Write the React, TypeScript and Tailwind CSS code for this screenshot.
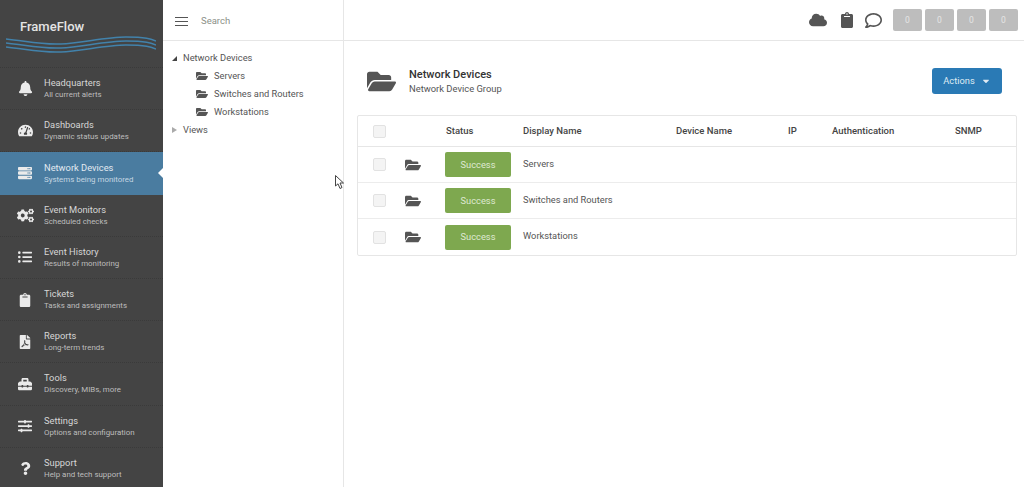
import type { ReactNode } from 'react';
import {
  FaBell,
  FaCaretDown,
  FaClipboard,
  FaCloud,
  FaCogs,
  FaFilePdf,
  FaFolderOpen,
  FaListUl,
  FaQuestion,
  FaRegComment,
  FaServer,
  FaSlidersH,
  FaTachometerAlt,
  FaToolbox,
} from 'react-icons/fa';

const navItems: { title: string; sub: string; icon: ReactNode; active?: boolean }[] = [
  { title: 'Headquarters', sub: 'All current alerts', icon: <FaBell size={15} /> },
  { title: 'Dashboards', sub: 'Dynamic status updates', icon: <FaTachometerAlt size={15} /> },
  { title: 'Network Devices', sub: 'Systems being monitored', icon: <FaServer size={14} />, active: true },
  { title: 'Event Monitors', sub: 'Scheduled checks', icon: <FaCogs size={17} /> },
  { title: 'Event History', sub: 'Results of monitoring', icon: <FaListUl size={14} /> },
  { title: 'Tickets', sub: 'Tasks and assignments', icon: <FaClipboard size={14} /> },
  { title: 'Reports', sub: 'Long-term trends', icon: <FaFilePdf size={14} /> },
  { title: 'Tools', sub: 'Discovery, MIBs, more', icon: <FaToolbox size={14} /> },
  { title: 'Settings', sub: 'Options and configuration', icon: <FaSlidersH size={14} /> },
  { title: 'Support', sub: 'Help and tech support', icon: <FaQuestion size={13} /> },
];

const rows = ['Servers', 'Switches and Routers', 'Workstations'];
const tableCols = 'grid grid-cols-[88px_77px_153px_112px_44px_123px_1fr] items-center';

function Wave() {
  const d = 'M0 3 C 20 5, 35 9, 55 8 S 100 1, 120 1 S 145 3, 150 5';
  return (
    <svg width="150" height="18" viewBox="0 0 150 18" fill="none" stroke="#4282ab" strokeWidth="1.5">
      <path d={d} />
      <path d={d} transform="translate(0 4)" />
      <path d={d} transform="translate(0 8)" />
    </svg>
  );
}

function Checkbox() {
  return <div className="ml-[15px] h-[13px] w-[13px] rounded-[2px] border border-[#e2e2e2] bg-[#f4f4f4]" />;
}

export default function App() {
  return (
    <div className="relative flex h-[487px] w-[1024px] overflow-hidden bg-white font-['Roboto',sans-serif] text-[#4a4a4a]">
      {/* Sidebar */}
      <aside className="flex w-[163px] shrink-0 flex-col overflow-hidden bg-[#444444]">
        <div className="h-[68px] shrink-0 border-b border-dotted border-[#3a3a3a] pl-1.5">
          <div className="pl-3.5 pt-[18px] text-[13px] leading-[18px] font-medium text-[#e4e4e4]">FrameFlow</div>
          <Wave />
        </div>
        {navItems.map((item) => (
          <div
            key={item.title}
            className={`relative flex h-[42.2px] shrink-0 items-center ${
              item.active ? 'bg-[#4a7ca0]' : 'border-b border-dotted border-[#3a3a3a]'
            }`}
          >
            <div className="flex w-[44px] shrink-0 justify-center pl-[6px] text-[#ebebeb]">{item.icon}</div>
            <div className="min-w-0">
              <div className={`text-[9.3px] leading-[13px] whitespace-nowrap ${item.active ? 'text-[#e3eaf0]' : 'text-[#d6d6d6]'}`}>
                {item.title}
              </div>
              <div className={`text-[7.9px] leading-[12px] whitespace-nowrap ${item.active ? 'text-[#c4d6e2]' : 'text-[#bdbdbd]'}`}>
                {item.sub}
              </div>
            </div>
            {item.active && (
              <div className="absolute right-0 top-[16px] h-0 w-0 border-y-[5px] border-r-[5px] border-y-transparent border-r-white" />
            )}
          </div>
        ))}
      </aside>

      {/* Tree panel */}
      <div className="flex w-[181px] shrink-0 flex-col border-r border-[#e6e6e6]">
        <div className="flex h-[41px] shrink-0 items-center border-b border-[#e6e6e6] pl-3 pt-[2px]">
          <div className="flex w-[13px] flex-col gap-[3px]">
            <div className="h-px bg-[#555555]" />
            <div className="h-px bg-[#555555]" />
            <div className="h-px bg-[#555555]" />
          </div>
          <span className="ml-[13px] text-[9.5px] text-[#8b9088]">Search</span>
        </div>
        <div className="pt-[8px] text-[9.3px] leading-[18px] text-[#555555]">
          <div className="flex items-center pl-[9px]">
            <div className="h-0 w-0 border-b-[5px] border-l-[5px] border-b-[#444444] border-l-transparent" />
            <span className="ml-1.5">Network Devices</span>
          </div>
          {rows.map((r) => (
            <div key={r} className="flex items-center pl-[33px]">
              <FaFolderOpen size={12} className="text-[#555555]" />
              <span className="ml-1.5">{r}</span>
            </div>
          ))}
          <div className="flex items-center pl-[9px]">
            <div className="h-0 w-0 border-y-[3.5px] border-l-[5px] border-y-transparent border-l-[#aaaaaa]" />
            <span className="ml-[6px]">Views</span>
          </div>
        </div>
      </div>

      {/* Main */}
      <div className="flex min-w-0 flex-1 flex-col">
        <div className="flex h-[41px] shrink-0 items-center justify-end gap-[3px] border-b border-[#e6e6e6] pr-1.5">
          <FaCloud size={18} className="mr-[9px] text-[#555555]" />
          <FaClipboard size={16} className="mr-[7px] text-[#555555]" />
          <FaRegComment size={17} className="mr-[8px] text-[#555555]" />
          {[0, 1, 2, 3].map((i) => (
            <div
              key={i}
              className="flex h-[22px] w-[29px] items-center justify-center rounded-[2px] bg-[#bdbdbd] text-[8.5px] text-[#e5e5e5]"
            >
              0
            </div>
          ))}
        </div>

        <div className="flex items-center justify-between pl-[23px] pr-[22px] pt-[27px]">
          <div className="flex -translate-y-px items-center">
            <FaFolderOpen size={29} className="text-[#555555]" />
            <div className="ml-[13px]">
              <div className="text-[11px] leading-[14px] font-medium text-[#333333]">Network Devices</div>
              <div className="text-[9.4px] leading-[13px] text-[#555555]">Network Device Group</div>
            </div>
          </div>
          <div className="flex h-[26px] w-[70px] -translate-y-0.5 items-center justify-center gap-1.5 rounded-[3px] bg-[#2a7ab5] text-[9.3px] text-[#dfeaf3]">
            Actions
            <FaCaretDown size={10} />
          </div>
        </div>

        <div className="ml-[13px] mt-[18px] w-[660px] rounded-[2px] border border-[#e6e6e6] text-[9.3px]">
          <div className={`${tableCols} h-[31px] border-b border-[#e6e6e6] text-[9.5px] font-medium text-[#444444]`}>
            <Checkbox />
            <span>Status</span>
            <span>Display Name</span>
            <span>Device Name</span>
            <span>IP</span>
            <span>Authentication</span>
            <span>SNMP</span>
          </div>
          {rows.map((r, i) => (
            <div key={r} className={`${tableCols} h-[36px] ${i < 2 ? 'border-b border-[#ececec]' : ''}`}>
              <div className="flex items-center">
                <Checkbox />
                <FaFolderOpen size={16} className="ml-[19px] text-[#555555]" />
              </div>
              <div className="flex h-[25px] w-[66px] -translate-x-px items-center justify-center rounded-[2px] bg-[#7ea84f] text-[9.3px] text-[#dfe9d2]">
                Success
              </div>
              <span className="col-span-5 -translate-y-px text-[#555555]">{r}</span>
            </div>
          ))}
        </div>
      </div>

      {/* Mouse cursor */}
      <svg className="absolute left-[335px] top-[175px]" width="10" height="15" viewBox="0 0 10 15">
        <path d="M0.5 0.5 L0.5 11 L3 8.8 L5 13.5 L7 12.5 L5 8 L8.5 8 Z" fill="white" stroke="#444444" strokeWidth="1" />
      </svg>
    </div>
  );
}
